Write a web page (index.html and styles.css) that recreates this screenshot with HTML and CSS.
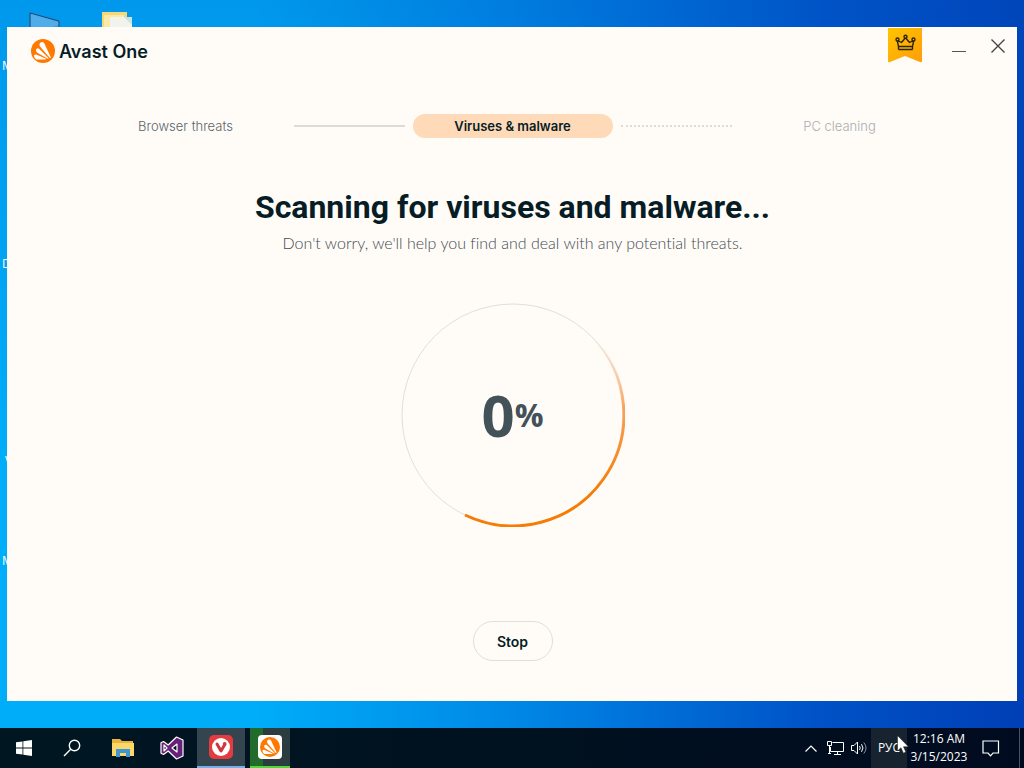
FILE: index.html
```
<!DOCTYPE html>
<html lang="en">
<head>
  <meta charset="UTF-8">
  <title>Avast One</title>
  <meta name="viewport" content="width=device-width, initial-scale=1">
  <link rel="stylesheet" href="styles.css">
</head>
<body>
<!-- shared logo, used in the title bar and the taskbar -->
<svg class="defs" aria-hidden="true">
  <symbol id="avast" viewBox="0 0 24 24">
    <circle cx="12" cy="12" r="12" fill="#ff7800"/>
    <path d="M8.500 5.500c0-2.300 3.600-3.700 5-.8l6.300 13.600c.3.700-.5 1.100-.9.600L9.200 7.700c-.5-.7-.7-1.400-.7-2.200z" fill="#fff"/>
    <path d="M5 11.500c-.3-2 1.700-3 3.100-1.800l9.300 9.300c.4.500 0 1-.6.700L6.400 13.700c-.9-.6-1.300-1.300-1.400-2.200z" fill="#fff"/>
    <path d="M3.200 17.800c-.8-1.700.5-2.800 2.200-2.300l9.200 4c.5.300.3.900-.2.900H5.600c-1 0-1.900-1.400-2.400-2.600z" fill="#fff"/>
  </symbol>
</svg>

<main class="desktop">
  <div class="icons">
    <svg class="pc" width="32" height="26" viewBox="0 0 32 26"><path d="M1 1l29 8v17H1z" fill="#3a9fdc" stroke="#24466b"/><path d="M2 2l27 8v3L2 22z" fill="#4fadea"/></svg>
    <svg class="folder" width="32" height="26" viewBox="0 0 32 26"><path d="M1 0h25v26H1z" fill="#f5d877"/><path d="M3 3h20v23H3z" fill="#fbe9a8"/><path d="M9 5h16l6 2v19H9z" fill="#f3f3ee"/><path d="M23 5h8v8z" fill="#c8e4df"/></svg>
    <span class="label l1">My PC</span>
    <span class="label l2">Docs</span>
    <span class="label l3">Vivaldi</span>
    <span class="label l4">Music</span>
  </div>

  <section class="window">
    <header class="titlebar">
      <svg class="logo" width="24" height="24"><use href="#avast"/></svg>
      <span class="brand">Avast One</span>
      <div class="controls">
        <button class="ribbon" aria-label="Upgrade">
          <svg width="34" height="36" viewBox="0 0 34 36">
            <defs><linearGradient id="gold" x1="0" y1="0" x2="1" y2="1"><stop offset="0" stop-color="#ffc400"/><stop offset="1" stop-color="#ff9d0a"/></linearGradient></defs>
            <path d="M0 0h34v33q0 2-2 1l-15-6-15 6q-2 1-2-1z" fill="url(#gold)"/>
            <g fill="none" stroke="#2b2508" stroke-width="1.400" stroke-linejoin="round"><path d="M10.500 21.500h14M10.500 18.500h14l1.300-6.200-4.300 2.200-4-4.800-4 4.800-4.300-2.200zM10.500 18.500v3M24.500 18.500v3"/><circle cx="17.500" cy="8.700" r="1.500" fill="#ffbd02"/><circle cx="9.500" cy="11.500" r="1.500" fill="#ffbd02"/><circle cx="25.500" cy="11.500" r="1.500" fill="#ffbd02"/></g>
          </svg>
        </button>
        <button class="winbtn" aria-label="Minimize"><svg width="14" height="14" viewBox="0 0 14 14"><path d="M0 12.500h14" stroke="#555"/></svg></button>
        <button class="winbtn" aria-label="Close"><svg width="14" height="14" viewBox="0 0 14 14"><path d="M.5.500l13 13M13.500.500l-13 13" stroke="#444" stroke-width="1.400"/></svg></button>
      </div>
    </header>

    <div class="content">
      <ol class="steps">
        <li class="step done">Browser threats</li>
        <li class="line" aria-hidden="true"></li>
        <li class="step active">Viruses &amp; malware</li>
        <li class="line dotted" aria-hidden="true"></li>
        <li class="step next">PC cleaning</li>
      </ol>

      <h1>Scanning for viruses and malware...</h1>
      <p class="sub">Don't worry, we'll help you find and deal with any potential threats.</p>

      <div class="progress">
        <svg class="ring" viewBox="0 0 224 224">
          <defs><linearGradient id="sweep" gradientUnits="userSpaceOnUse" x1="0" y1="36" x2="0" y2="190"><stop offset="0" stop-color="#f9c9a0" stop-opacity="0"/><stop offset=".45" stop-color="#f6a25a"/><stop offset="1" stop-color="#f57c05"/></linearGradient></defs>
          <circle cx="112" cy="112" r="111" fill="none" stroke="#e6dcda"/>
          <path d="M190 33A111 111 0 0 1 64 212" fill="none" stroke="url(#sweep)" stroke-width="3"/>
        </svg>
        <span class="num">0</span><span class="pct">%</span>
      </div>

      <button class="stop">Stop</button>
    </div>
  </section>
</main>

<footer class="taskbar">
  <nav class="apps">
    <button class="app" aria-label="Start"><svg width="16" height="16" viewBox="0 0 16 16" fill="#fff"><path d="M0 2.300l6.500-.9v6.200H0zM7.300 1.300L16 0v7.600H7.300zM0 8.400h6.500v6.200L0 13.700zM7.300 8.400H16V16l-8.700-1.300z"/></svg></button>
    <button class="app search" aria-label="Search"><svg width="18" height="18" viewBox="0 0 18 18" fill="none" stroke="#fff" stroke-width="1.400"><circle cx="11.500" cy="6.500" r="5.200"/><path d="M7.700 10.300L1 17"/></svg></button>
    <button class="app" aria-label="File Explorer"><svg width="22" height="18" viewBox="0 0 22 18"><path d="M0 0h8l2 2h11v15H0z" fill="#e8b33c"/><path d="M0 4h22v13H0z" fill="#fbd668"/><path d="M4 10h14v8h-4v-4H8v4H4z" fill="#3e97d3"/></svg></button>
    <button class="app" aria-label="Visual Studio"><svg width="24" height="24" viewBox="0 0 24 24"><path fill-rule="evenodd" d="M16.500 1L23 4v16l-6.500 3-8.300-8L3.500 18.500 1 17.300V6.700l2.500-1.200L8.200 9zM17 8l-5 4 5 4zM4 9v6l3-3z" fill="#68217a" stroke="#fff" stroke-width="1.200" stroke-linejoin="round"/></svg></button>
    <button class="app open" aria-label="Vivaldi"><svg width="24" height="24" viewBox="0 0 24 24"><rect width="24" height="24" rx="5" fill="#e43b3f"/><circle cx="12" cy="12" r="9" fill="#fff"/><path d="M8 9l4 7 3.500-6" fill="none" stroke="#d0363b" stroke-width="3" stroke-linecap="round" stroke-linejoin="round"/><circle cx="15.700" cy="9" r="1.900" fill="#d0363b"/></svg></button>
    <button class="app busy" aria-label="Avast One"><svg width="24" height="24" viewBox="0 0 24 24"><rect width="24" height="24" rx="4" fill="#fff"/><use href="#avast" x="2" y="2" width="20" height="20"/></svg></button>
  </nav>
  <div class="tray">
    <button class="trayicon" aria-label="Show hidden icons"><svg width="12" height="7" viewBox="0 0 12 7"><path d="M.5 6.500L6 1l5.500 5.500" fill="none" stroke="#fff" stroke-width="1.200"/></svg></button>
    <button class="trayicon" aria-label="Network"><svg width="17" height="14" viewBox="0 0 17 14" fill="none" stroke="#fff"><path d="M5.500 1.500h11v9H3.500V6M7 13.500h7M10.500 10.500v3M.5.500h4v4h-4zM2.500 4.500v8M1 12.500h3"/></svg></button>
    <button class="trayicon" aria-label="Volume"><svg width="16" height="14" viewBox="0 0 16 14" fill="none" stroke="#fff"><path d="M.5 4.500h2.500L6.500 1v12L3 9.500H.5z"/><path d="M8.500 5q1.500 2 0 4M10.500 3.200q3 3.800 0 7.600"/><path d="M12.800 1.500q4.500 5.500 0 11" stroke="#8d9399"/></svg></button>
    <button class="lang">РУС</button>
    <div class="clock"><time>12:16 AM</time><time>3/15/2023</time></div>
    <button class="notify" aria-label="Notifications"><svg width="18" height="17" viewBox="0 0 18 17"><path d="M1 1h15.500v12h-5.500l-2.500 2.800L6 13H1z" fill="none" stroke="#fff" stroke-width="1.200"/></svg></button>
    <span class="peek"></span>
  </div>
</footer>

<svg class="cursor" width="12" height="19" viewBox="0 0 12 19"><path d="M.5.500v15.500l3.500-3.300 2.400 5.500 2.500-1.100-2.400-5.300h5z" fill="#fff" stroke="#111" stroke-width=".5"/></svg>
</body>
</html>
```
FILE: styles.css
```
*{box-sizing:border-box;}
body{font-family:Inter,"Liberation Sans",sans-serif;margin:0;min-height:100vh;display:flex;flex-direction:column;position:relative;background:linear-gradient(180deg,rgba(0,90,200,.25),rgba(0,90,200,0) 60%),linear-gradient(90deg,#00adf8 0%,#00adf8 25%,#0088e6 50%,#0052c6 80%,#003fb6 100%);}
button{font:inherit;color:inherit;background:none;border:0;padding:0;cursor:pointer;display:flex;align-items:center;justify-content:center;}
svg{display:block;}
.defs{position:absolute;width:0;height:0;}

/* desktop */
.desktop{flex:1;display:flex;padding:27px 7px;position:relative;}
.icons{position:absolute;inset:0;overflow:hidden;color:#fff;font:12px/16px "Open Sans",sans-serif;}
.pc,.folder,.label{position:absolute;}
.pc{left:29px;top:12px;}
.folder{left:101px;top:12px;}
.label{left:2px;}
.l1{top:58px;}
.l2{top:256px;}
.l3{top:453px;left:5px;}
.l4{top:553px;}

/* app window */
.window{flex:1;position:relative;display:flex;flex-direction:column;background:#fffcf8;color:#071d26;}
.titlebar{display:flex;align-items:center;height:48px;padding:0 12px 0 24px;}
.brand{font-size:18px;font-weight:600;margin-left:4px;}
.controls{display:flex;margin-left:auto;align-self:flex-start;gap:24px;}
.ribbon{margin-right:6px;}
.winbtn{width:14px;height:38px;}
.winbtn + .winbtn{margin-left:1px;}
.content{flex:1;display:flex;flex-direction:column;align-items:center;padding:39px 16px 40px 17px;}

.steps{list-style:none;display:flex;align-items:center;justify-content:center;gap:8px;margin:0;padding:0;width:100%;font-size:13px;line-height:24px;}
.step{flex:0 1 200px;text-align:center;}
.done{font-weight:300;color:#59646a;}
.active{font-weight:600;background:#ffdab9;border-radius:12px;}
.next{font-weight:300;color:#aaadae;}
.line{flex:0 1 111px;border-top:2px solid #dbdbd8;}
.dotted{border-top-style:dotted;}

h1{font-family:Roboto,"Liberation Sans",sans-serif;font-size:32px;line-height:40px;font-weight:700;margin:49px 0 4px;text-align:center;}
.sub{font-family:Lato,"Liberation Sans",sans-serif;font-size:16px;line-height:24px;font-weight:300;font-variant-ligatures:none;color:#3f4b51;margin:0 0 48px;text-align:center;}
.progress{position:relative;width:224px;height:224px;display:flex;align-items:center;justify-content:center;color:#435159;font-family:"Open Sans","Liberation Sans",sans-serif;font-weight:700;}
.ring{position:absolute;inset:0;}
.num{font-size:58px;line-height:64px;}
.pct{font-size:32px;line-height:40px;}
.stop{width:80px;height:40px;margin-top:auto;border:1px solid #e5dcd8;border-radius:20px;font-size:14px;font-weight:600;}

/* taskbar */
.taskbar{display:flex;justify-content:space-between;height:40px;background:linear-gradient(90deg,#001722,#00101f 60%,#010b20);color:#fff;}
.apps,.tray{display:flex;}
.apps{gap:1px;}
.app{width:48px;}
.search{margin:0 2px 0 -1px;}
.open{background:#34454f;border-bottom:2px solid #76aee8;}
.busy{width:40px;margin-left:4px;background:linear-gradient(90deg,#226b2c 13px,#2c3d40 13px);border-bottom:2px solid #4fd637;}
.trayicon{width:24px;}
.lang{width:36px;background:#17242f;font:12px/16px "Open Sans",sans-serif;}
.clock{display:flex;flex-direction:column;justify-content:center;width:64px;text-align:center;font:12px/18px "Open Sans",sans-serif;}
.notify{width:40px;}
.peek{width:5px;margin-left:8px;border-left:1px solid #485260;}
.cursor{position:absolute;right:115px;bottom:14px;}
```
